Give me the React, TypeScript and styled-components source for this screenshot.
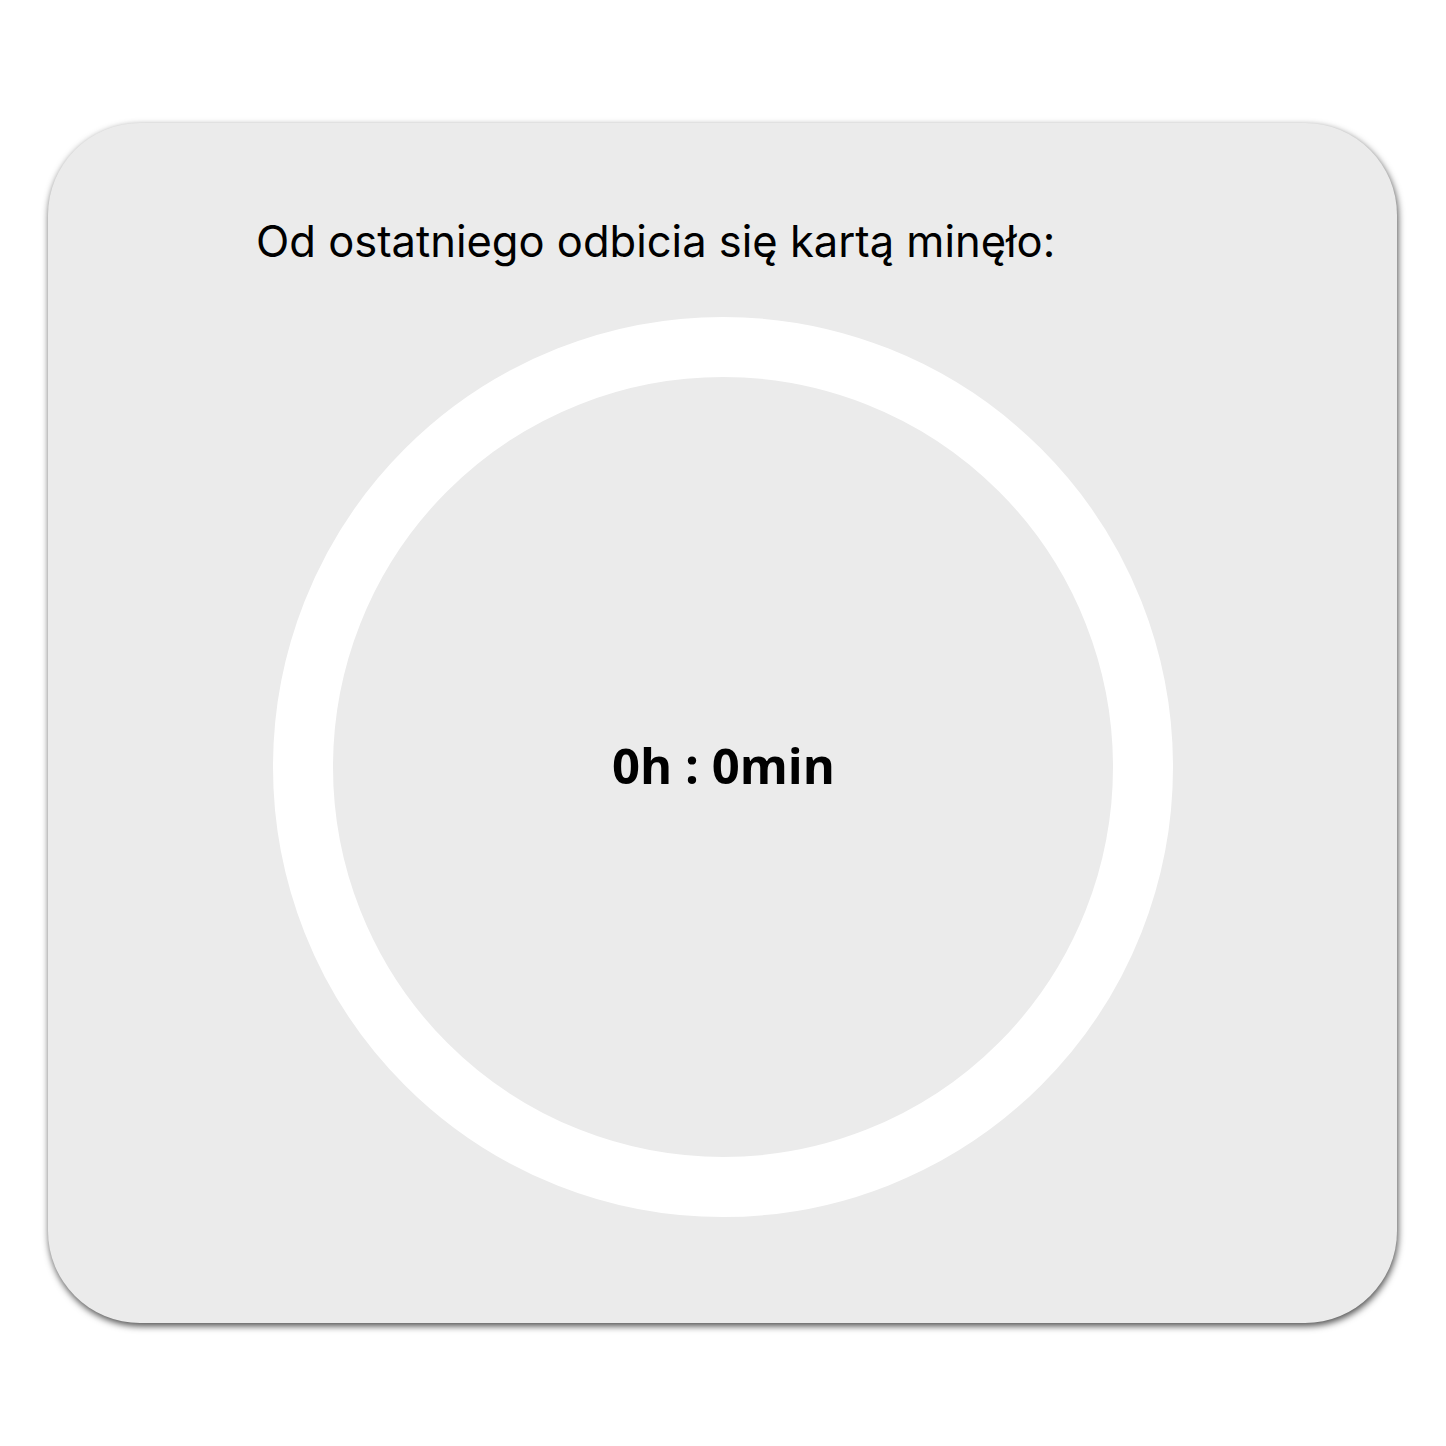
import React from "react";
import styled, { createGlobalStyle } from "styled-components";

const Global = createGlobalStyle`
  html, body { margin: 0; padding: 0; background: #ffffff; }
  body { font-family: Inter, "Noto Sans", sans-serif; }
`;

const Page = styled.div`
  width: 1446px;
  height: 1446px;
  box-sizing: border-box;
  padding: 123px 49px 0 48px;
`;

const Card = styled.div`
  box-sizing: border-box;
  width: 1349px;
  height: 1200px;
  background: #ebebeb;
  border-radius: 92px;
  box-shadow: 1px 3px 7px rgba(0, 0, 0, 0.7);
  display: flex;
  flex-direction: column;
  padding-top: 94px;
`;

const Title = styled.div`
  padding-left: 208px;
  font-family: Inter, "Noto Sans", sans-serif;
  font-size: 43.5px;
  line-height: 48px;
  color: #000;
`;

const RingWrap = styled.div`
  display: flex;
  justify-content: center;
  margin-top: 52px;
`;

const Ring = styled.div`
  box-sizing: border-box;
  width: 900px;
  height: 900px;
  border-radius: 50%;
  border: 60px solid #ffffff;
  display: flex;
  align-items: center;
  justify-content: center;
`;

const Time = styled.div`
  font-family: "Open Sans", sans-serif;
  font-weight: 700;
  font-size: 49px;
  color: #000;
  margin-left: 2px;
  margin-top: -4px;
`;

export default function App() {
  return (
    <>
      <Global />
      <Page>
        <Card>
          <Title>Od ostatniego odbicia się kartą minęło:</Title>
          <RingWrap>
            <Ring>
              <Time>0h : 0min</Time>
            </Ring>
          </RingWrap>
        </Card>
      </Page>
    </>
  );
}
